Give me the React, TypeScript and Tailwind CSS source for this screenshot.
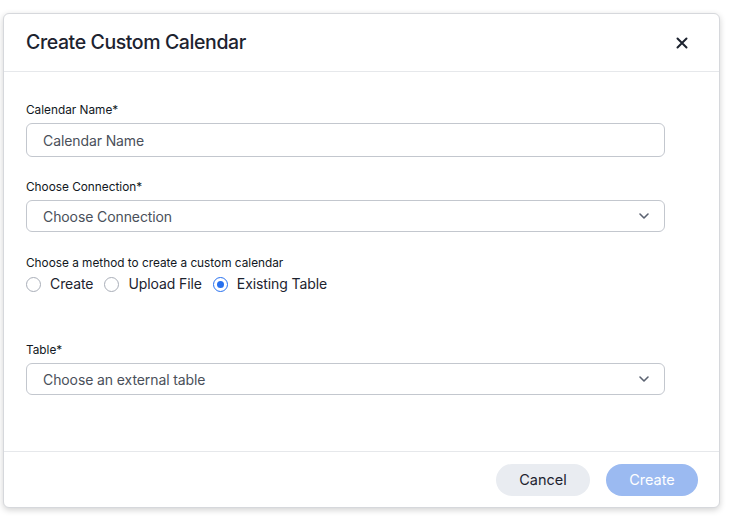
import React from "react";

const font = { fontFamily: "Inter, 'Noto Sans', sans-serif" };

function Chevron() {
  return (
    <svg width="14" height="14" viewBox="0 0 14 14" fill="none">
      <path d="M3 5 L7 9 L11 5" stroke="#5b6271" strokeWidth="1.6" strokeLinecap="round" strokeLinejoin="round" />
    </svg>
  );
}

function Radio({ label, checked }: { label: string; checked?: boolean }) {
  return (
    <label className="flex items-center gap-[9px]">
      <span
        className={
          checked
            ? "w-[15px] h-[15px] rounded-full border-[1.5px] border-[#2770ef] flex items-center justify-center"
            : "w-[15px] h-[15px] rounded-full border border-[#a9aeb8]"
        }
      >
        {checked && <span className="w-[7px] h-[7px] rounded-full bg-[#2770ef]" />}
      </span>
      <span className="text-[14px] text-[#1d232f] leading-[16px] tracking-[-0.1px]">{label}</span>
    </label>
  );
}

export default function App() {
  return (
    <div className="w-[734px] h-[520px] bg-white pt-[13px] pl-[3px]" style={font}>
      <div className="w-[717px] h-[495px] bg-white rounded-[6px] border border-[#d6d8dc] shadow-[0_2px_6px_rgba(0,0,0,0.18)] flex flex-col">
        <div className="h-[58px] shrink-0 flex items-center justify-between pl-[22px] pr-[31px] border-b border-[#e6e8eb]">
          <span className="text-[19.5px] font-medium text-[#1d232f] tracking-[-0.4px]">Create Custom Calendar</span>
          <svg width="12" height="12" viewBox="0 0 12 12">
            <path d="M1.5 1.5 L10.5 10.5 M10.5 1.5 L1.5 10.5" stroke="#1d232f" strokeWidth="2" strokeLinecap="round" />
          </svg>
        </div>
        <div className="flex-1 pl-[22px] pr-[54px] pt-[30px] flex flex-col">
          <div className="text-[11.8px] leading-[16px] text-[#111722]">Calendar Name*</div>
          <div className="mt-[5px] h-[34px] rounded-[6px] border border-[#c3c7ce] flex items-center px-[16px] text-[14px] tracking-[-0.1px] text-[#4a505a]">
            Calendar Name
          </div>
          <div className="mt-[22px] text-[11.8px] leading-[16px] text-[#111722]">Choose Connection*</div>
          <div className="mt-[5px] h-[32px] rounded-[6px] border border-[#c3c7ce] flex items-center justify-between pl-[16px] pr-[13px] text-[14px] tracking-[-0.1px] text-[#4a505a]">
            <span>Choose Connection</span>
            <Chevron />
          </div>
          <div className="mt-[23px] text-[11.8px] leading-[16px] text-[#111722]">Choose a method to create a custom calendar</div>
          <div className="mt-[5px] flex items-center gap-[11px]">
            <Radio label="Create" />
            <Radio label="Upload File" />
            <Radio label="Existing Table" checked />
          </div>
          <div className="mt-[50px] text-[11.8px] leading-[16px] text-[#111722]">Table*</div>
          <div className="mt-[5px] h-[32px] rounded-[6px] border border-[#c3c7ce] flex items-center justify-between pl-[16px] pr-[13px] text-[14px] tracking-[-0.1px] text-[#4a505a]">
            <span>Choose an external table</span>
            <Chevron />
          </div>
        </div>
        <div className="h-[56px] shrink-0 border-t border-[#e6e8eb] flex items-center justify-end gap-[16px] pr-[21px] pt-[1px]">
          <button className="w-[94px] h-[32px] rounded-full bg-[#e9ecf1] text-[14.5px] text-[#1d232f]">Cancel</button>
          <button className="w-[92px] h-[32px] rounded-full bg-[#9bbaf1] text-[14.5px] text-white">Create</button>
        </div>
      </div>
    </div>
  );
}
